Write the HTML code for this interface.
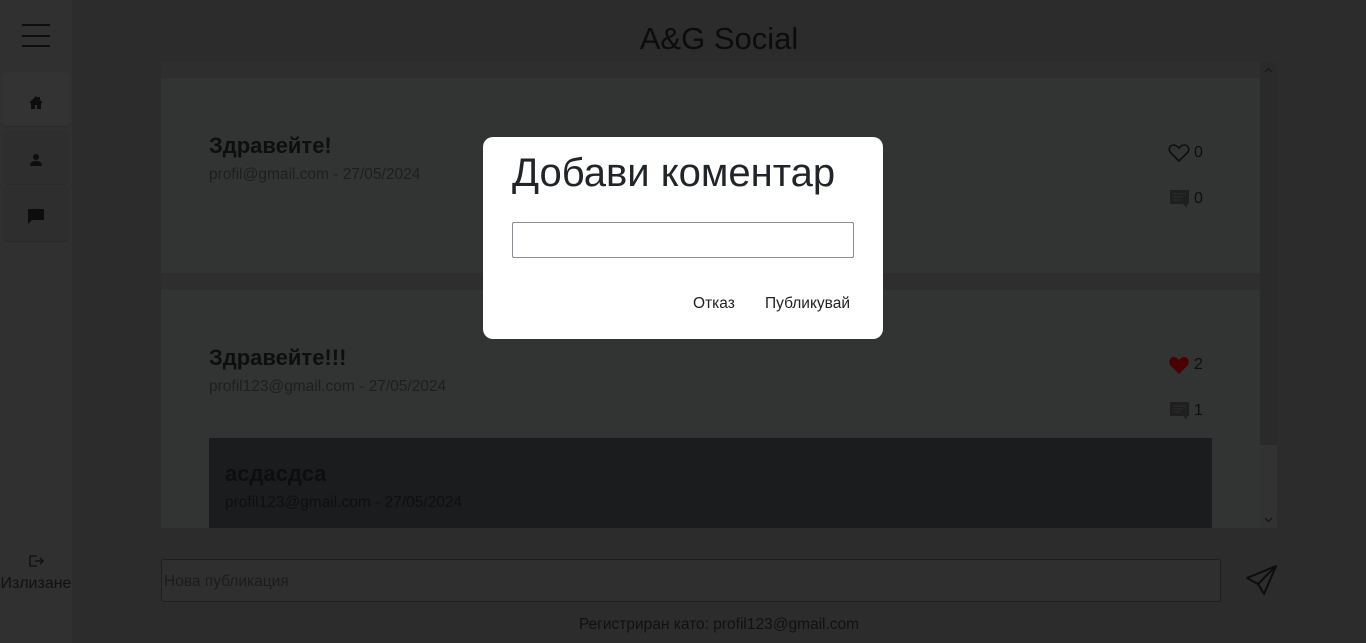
<!DOCTYPE html>
<html><head><meta charset="utf-8"><style>
*{box-sizing:border-box;margin:0;padding:0}
body{width:1366px;height:643px;overflow:hidden;background:#2c2c2c;font-family:"Liberation Sans","DejaVu Sans",sans-serif;color:#0d0d0d;position:relative}
.abs{position:absolute}
.side{left:0;top:0;width:72px;height:643px;background:#303030}
.nav{left:2px;width:68px;height:55px;border-radius:6px;background:#2e2e2e;border-bottom:1px solid #2a2a2a}
.card{background:#323433}
.t{font-weight:bold;font-size:22px;color:#0e0e0e}
.s{font-size:15.5px;color:#1e1e1e}
.n{font-size:16px;color:#0e0e0e}
</style></head><body>
<div class="abs side"></div>
<div class="abs" style="left:22px;top:24px;width:28px;height:2px;background:#0d0d0d"></div>
<div class="abs" style="left:22px;top:35px;width:28px;height:2px;background:#0d0d0d"></div>
<div class="abs" style="left:22px;top:45px;width:28px;height:2px;background:#0d0d0d"></div>
<div class="abs nav" style="top:72px;background:#333"></div>
<div class="abs nav" style="top:130px"></div>
<div class="abs nav" style="top:187px"></div>
<svg class="abs" style="left:28px;top:95px" width="16" height="16" viewBox="0 0 16 16"><path d="M8 1L1 8h2v6h4v-4h2v4h4V8h2L12 5V2h-2v1z" fill="#0d0d0d"/></svg>
<svg class="abs" style="left:29px;top:153px" width="14" height="14" viewBox="0 0 14 14"><circle cx="7" cy="4" r="3" fill="#0d0d0d"/><path d="M1 13c0-4 3-5 6-5s6 1 6 5z" fill="#0d0d0d"/></svg>
<svg class="abs" style="left:27px;top:208px" width="18" height="17" viewBox="0 0 18 17"><path d="M1 1h16v11H5l-4 4z" fill="#0d0d0d"/></svg>
<svg class="abs" style="left:28px;top:554px" width="16" height="14" viewBox="0 0 16 14"><path d="M9 2H2v10h7M7 7h8M12 4l3 3-3 3" fill="none" stroke="#0d0d0d" stroke-width="1.3"/></svg>
<div class="abs" style="left:0;top:575px;width:72px;text-align:center;font-size:16px;color:#111">Излизане</div>

<div class="abs" style="left:72px;top:21px;width:1294px;text-align:center;font-size:31px;color:#0c0c0c">A&amp;G Social</div>

<div class="abs" style="left:161px;top:62px;width:1116px;height:466px;background:#2e2e2e;overflow:hidden">
 <div class="abs card" style="left:0;top:16px;width:1099px;height:195px">
  <div class="abs t" style="left:48px;top:55px">Здравейте!</div>
  <div class="abs s" style="left:48px;top:88px">profil@gmail.com - 27/05/2024</div>
 </div>
 <div class="abs card" style="left:0;top:228px;width:1099px;height:240px">
  <div class="abs t" style="left:48px;top:55px">Здравейте!!!</div>
  <div class="abs s" style="left:48px;top:88px">profil123@gmail.com - 27/05/2024</div>
  <div class="abs" style="left:48px;top:148px;width:1003px;height:100px;background:#1b1c1e">
   <div class="abs t" style="left:16px;top:23px">асдасдса</div>
   <div class="abs s" style="left:16px;top:56px;color:#0f0f10">profil123@gmail.com - 27/05/2024</div>
  </div>
 </div>
 <div class="abs" style="left:1099px;top:0;width:17px;height:383px;background:#2a2a2a"></div>
 <div class="abs" style="left:1099px;top:383px;width:17px;height:83px;background:#323232"></div>
 <svg class="abs" style="left:1102px;top:4px" width="11" height="8" viewBox="0 0 11 8"><path d="M2 6l3.5-3.5L9 6" fill="none" stroke="#1a1a1a" stroke-width="1.5"/></svg>
 <svg class="abs" style="left:1102px;top:454px" width="11" height="8" viewBox="0 0 11 8"><path d="M2 2l3.5 3.5L9 2" fill="none" stroke="#1a1a1a" stroke-width="1.5"/></svg>
</div>
<svg class="abs" style="left:1168px;top:143px" width="22" height="20" viewBox="0 0 22 20"><path d="M11 18L3 10C0 7 1 2 6 2c2 0 4 2 5 3 1-1 3-3 5-3 5 0 6 5 3 8z" fill="none" stroke="#0e0e0e" stroke-width="1.6"/></svg>
<div class="abs n" style="left:1194px;top:144px">0</div>
<svg class="abs" style="left:1169px;top:189px" width="21" height="20" viewBox="0 0 21 20"><path d="M1 1h19v14h-2v4l-4-4H1z" fill="#1f1f1f"/><path d="M4 5h13M4 8h10M4 11h7" stroke="#2c2c2c" stroke-width="1"/></svg>
<div class="abs n" style="left:1194px;top:190px">0</div>
<svg class="abs" style="left:1168px;top:355px" width="22" height="20" viewBox="0 0 22 20"><path d="M11 19L3 11C0 8 1 2 6 2c2 0 4 2 5 3 1-1 3-3 5-3 5 0 6 6 3 9z" fill="#4a0000"/></svg>
<div class="abs n" style="left:1194px;top:356px">2</div>
<svg class="abs" style="left:1169px;top:401px" width="21" height="20" viewBox="0 0 21 20"><path d="M1 1h19v14h-2v4l-4-4H1z" fill="#1f1f1f"/><path d="M4 5h13M4 8h10M4 11h7" stroke="#2c2c2c" stroke-width="1"/></svg>
<div class="abs n" style="left:1194px;top:402px">1</div>

<div class="abs" style="left:161px;top:559px;width:1060px;height:43px;border:1px solid #1e1e1e;border-radius:3px;background:#2f2f2f;padding:0 2px;font-size:15.5px;line-height:43px;color:#1c1c1c">Нова публикация</div>
<svg class="abs" style="left:1244px;top:564px" width="34" height="34" viewBox="0 0 34 34"><path d="M3 14L32 2 20 30 14 20zM32 2L14 20" fill="none" stroke="#0d0d0d" stroke-width="2" stroke-linejoin="round"/></svg>
<div class="abs" style="left:72px;top:616px;width:1294px;text-align:center;font-size:15.5px;color:#111">Регистриран като: profil123@gmail.com</div>

<div class="abs" style="left:483px;top:137px;width:400px;height:202px;background:#fff;border-radius:10px">
 <div class="abs" style="left:29px;top:14px;font-size:40px;color:#212529">Добави коментар</div>
 <div class="abs" style="left:29px;top:85px;width:342px;height:36px;border:1px solid #8e8a9e;border-radius:2px"></div>
 <div class="abs" style="left:210px;top:158px;font-size:15.5px;color:#222">Отказ</div>
 <div class="abs" style="left:282px;top:158px;font-size:15.5px;color:#222">Публикувай</div>
</div>
</body></html>
